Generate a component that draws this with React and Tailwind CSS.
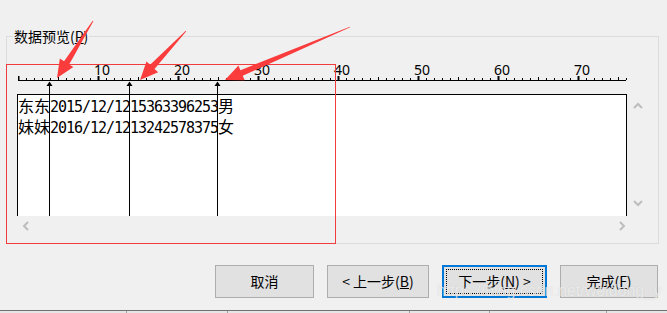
import React from 'react'

const rows = [
  ['东东', '2015/12/12', '15363396253', '男'],
  ['妹妹', '2016/12/12', '13242578375', '女'],
]

const breaks = [31.5, 111.5, 199.5]

// red annotation arrows: tail -> tip (page coords)
const arrows = [
  { t: [93, 21], p: [57, 78] },
  { t: [186, 31], p: [140, 80] },
  { t: [350, 27], p: [225, 80] },
]

function arrowPoints({ t, p }, h = 18, hw = 8, sw = 3) {
  const dx = p[0] - t[0]
  const dy = p[1] - t[1]
  const len = Math.hypot(dx, dy)
  const ux = dx / len
  const uy = dy / len
  const nx = -uy
  const ny = ux
  const bx = p[0] - ux * h
  const by = p[1] - uy * h
  const pts = [
    [t[0] + nx * 0.4, t[1] + ny * 0.4],
    [bx + nx * sw, by + ny * sw],
    [bx + nx * hw, by + ny * hw],
    p,
    [bx - nx * hw, by - ny * hw],
    [bx - nx * sw, by - ny * sw],
    [t[0] - nx * 0.4, t[1] - ny * 0.4],
  ]
  return pts.map(q => q.join(',')).join(' ')
}

function Ruler() {
  const ticks = []
  for (let i = 0; i <= 76; i++) {
    const x = i * 8
    if (i % 10 === 0) ticks.push(<rect key={i} x={x - 0.5} y={16} width={2} height={4} fill="#000" />)
    else if (i % 5 === 0) ticks.push(<rect key={i} x={x} y={17} width={1} height={3} fill="#000" />)
    else ticks.push(<rect key={i} x={x} y={18} width={1} height={2} fill="#000" />)
  }
  const labels = [10, 20, 30, 40, 50, 60, 70]
  return (
    <svg width="612" height="34" className="block">
      <rect x={0} y={20} width={608} height={1} fill="#000" />
      {ticks}
      {labels.map(n => (
        <text key={n} x={n * 8 - 4} y={15} fontSize="14" fontFamily="Noto Sans, sans-serif" fill="#000">
          {n}
        </text>
      ))}
      {breaks.map(x => (
        <g key={x}>
          <polygon points={`${x},21.5 ${x - 3},26 ${x + 3},26`} fill="#000" />
          <rect x={x - 0.5} y={25} width={1} height={9} fill="#000" />
        </g>
      ))}
    </svg>
  )
}

function Chevron({ dir, className }) {
  const d = {
    up: 'M1 6 L5 2 L9 6',
    down: 'M1 2 L5 6 L9 2',
    left: 'M6 1 L2 5 L6 9',
    right: 'M2 1 L6 5 L2 9',
  }[dir]
  const vertical = dir === 'up' || dir === 'down'
  return (
    <svg width={vertical ? 10 : 8} height={vertical ? 8 : 10} className={className}>
      <path d={d} fill="none" stroke="#bdbdbd" strokeWidth="2" />
    </svg>
  )
}

function Cjk({ children }) {
  return <span className="font-['Noto_Sans_CJK_SC',sans-serif] text-[16px] tracking-normal">{children}</span>
}

function Button({ children, focused, className }) {
  if (focused) {
    return (
      <button className={`relative h-[33px] bg-[#e1e1e1] border-2 border-[#0078d7] text-[14px] text-black ${className}`}>
        <span className="absolute inset-[2px] border border-dotted border-black" />
        {children}
      </button>
    )
  }
  return (
    <button className={`h-[33px] bg-[#e1e1e1] border border-[#adadad] text-[14px] text-black ${className}`}>
      {children}
    </button>
  )
}

export default function App() {
  return (
    <div className="relative w-[667px] h-[313px] overflow-hidden bg-[#f0f0f0] font-['Noto_Sans_CJK_SC',sans-serif] text-black">
      {/* 数据预览 group */}
      <div className="pt-[36px] pl-[6px] pr-[8px]">
        <div className="relative h-[208px] border border-[#dcdcdc]">
          <span className="absolute left-[6px] -top-[10px] bg-[#f0f0f0] px-px text-[14px] leading-[18px]">
            数据预览(<u>P</u>)
          </span>

          <div className="ml-[11px] mt-[23px]">
            <Ruler />
          </div>

          <div className="flex ml-[10px]">
            <div className="relative w-[610px] h-[122px] bg-white border-t border-l border-r border-black font-['DejaVu_Sans_Mono',monospace] text-[15px] tracking-[-1.03px] leading-[19px] pt-[1px]">
              {rows.map((r, i) => (
                <div key={i} className="whitespace-pre">
                  <Cjk>{r[0]}</Cjk>
                  {r[1]}
                  {r[2]}
                  <Cjk>{r[3]}</Cjk>
                </div>
              ))}
              {breaks.map(x => (
                <div key={x} className="absolute top-0 bottom-0 w-px bg-black" style={{ left: x - 0.5 }} />
              ))}
            </div>
            <div className="w-[21px] flex flex-col items-center justify-between pt-[8px] pb-[9px]">
              <Chevron dir="up" />
              <Chevron dir="down" />
            </div>
          </div>

          <div className="flex justify-between items-center w-[610px] h-[20px] ml-[15px]">
            <Chevron dir="left" />
            <Chevron dir="right" className="mr-[6px]" />
          </div>
        </div>
      </div>

      {/* wizard buttons */}
      <div className="flex justify-end gap-[13px] pr-[9px] pt-[21px]">
        <Button className="w-[99px]">取消</Button>
        <Button className="w-[102px]">
          &lt;&nbsp;上一步(<u>B</u>)
        </Button>
        <Button focused className="w-[105px]">
          下一步(<u>N</u>)&nbsp;&gt;
        </Button>
        <Button className="w-[98px]">
          完成(<u>F</u>)
        </Button>
      </div>

      {/* edge of the window underneath */}
      <div className="mt-[12px] h-[3px] border-t border-[#707070] bg-[#e6e6e6] flex">
        <div className="w-[127px] border-r border-[#a0a0a0]" />
        <div className="w-[101px] border-r border-[#a0a0a0]" />
        <div className="w-[182px] border-r border-[#a0a0a0]" />
        <div className="w-[80px] border-r border-[#a0a0a0]" />
        <div className="w-[117px] border-r border-[#a0a0a0]" />
      </div>

      {/* watermark */}
      <div className="absolute left-[437px] top-[279px] font-['Liberation_Sans',sans-serif] text-[16px] text-white/60 [text-shadow:0_0_1px_rgba(150,150,150,0.35)] pointer-events-none">
        https://blog.csdn.net/weidong_y
      </div>

      {/* red annotation */}
      <div className="absolute left-[6px] top-[64px] w-[330px] h-[180px] border border-[#f03c3c] pointer-events-none" />
      <svg className="absolute inset-0 pointer-events-none" width="667" height="313">
        {arrows.map((a, i) => (
          <polygon key={i} points={arrowPoints(a)} fill="#fa3c3c" />
        ))}
      </svg>
    </div>
  )
}
